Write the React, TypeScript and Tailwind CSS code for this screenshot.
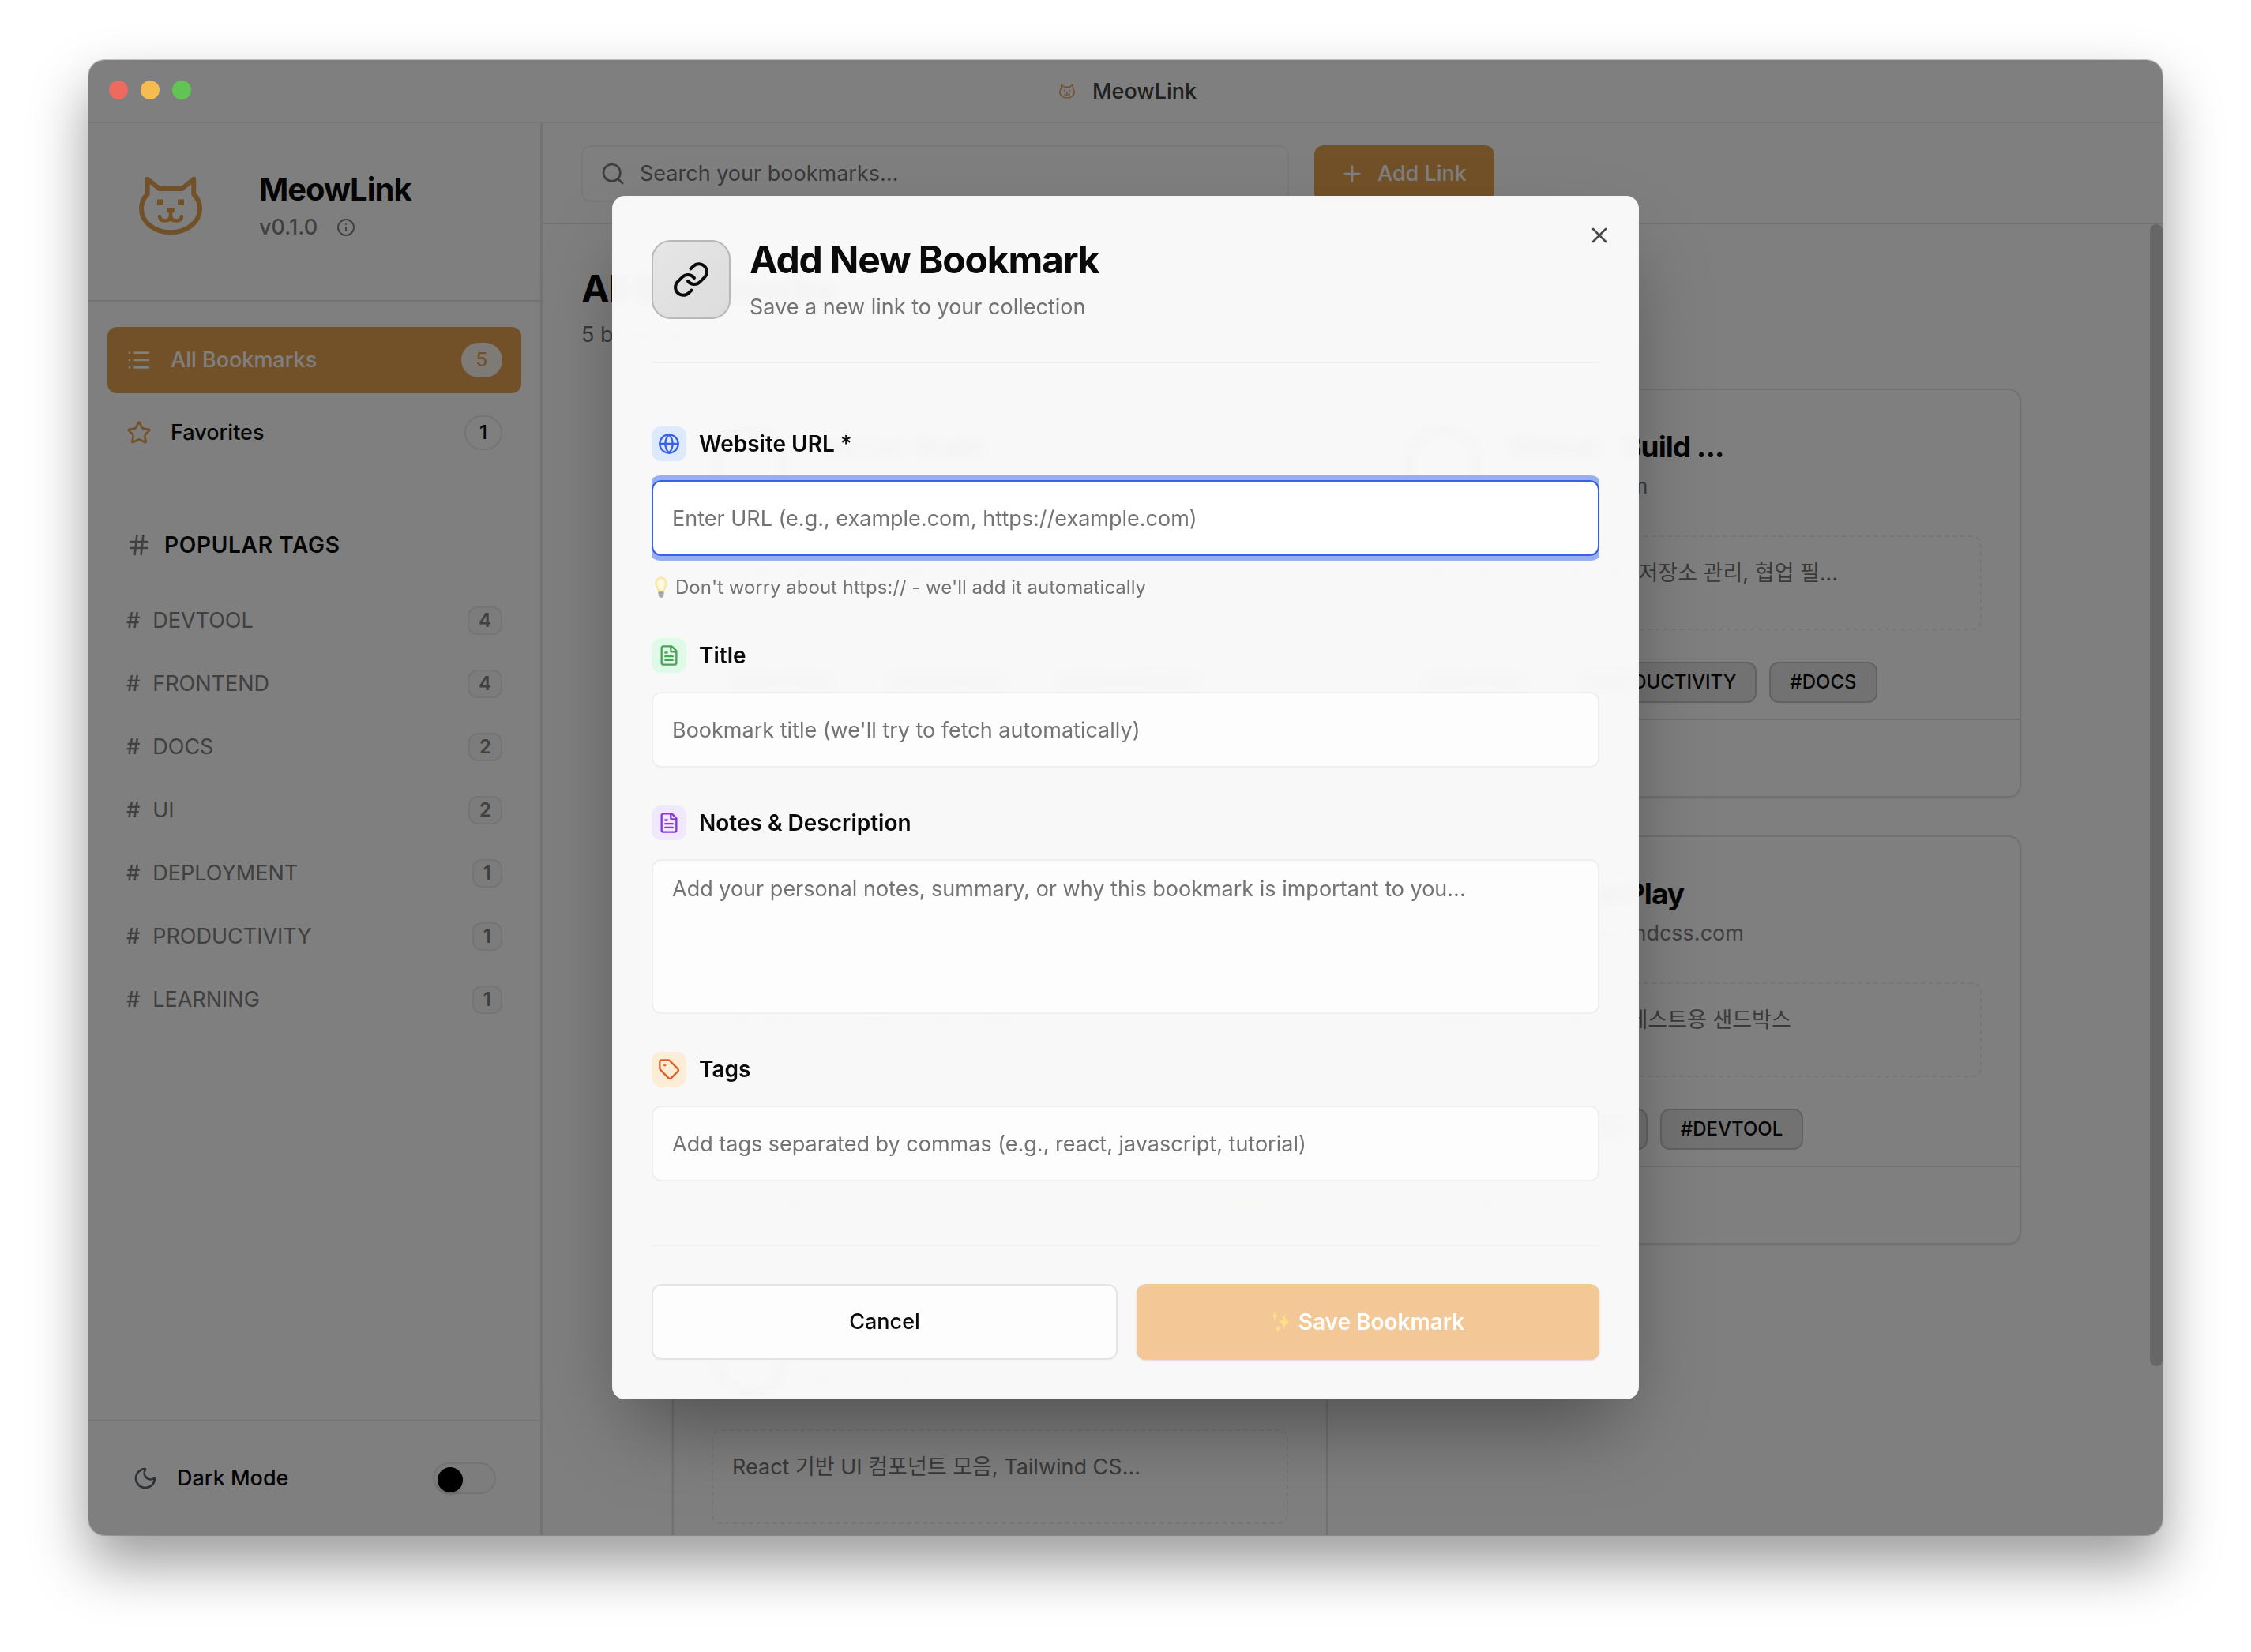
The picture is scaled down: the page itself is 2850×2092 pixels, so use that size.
import React from "react";
import {
  FileText,
  Globe,
  Hash,
  Info,
  Link,
  List,
  Moon,
  Plus,
  Search,
  Star,
  Tag,
  X,
} from "lucide-react";

function CatLogo({ className }: { className: string }) {
  return (
    <svg viewBox="0 0 128 128" className={className} fill="none" stroke="#e6a250" strokeLinejoin="round" strokeLinecap="round" aria-hidden="true">
      <path strokeWidth="6" d="M34.7 28.7 L49.7 41 H78.3 L93.3 28.7 V48 C98.5 53 101 59.5 101 66 C101 84 84 96.3 64 96.3 C44 96.3 27 84 27 66 C27 59.5 29.5 53 34.7 48 Z" />
      <path strokeWidth="4.5" d="M50 76 Q50.5 81.500 56.500 81.500 Q64 81.500 64 75 Q64 81.500 71.500 81.500 Q77.500 81.500 78 76 M64 76 V71" />
      <path d="M47 54.500 H55 V62 H47 Z M73 54.500 H81 V62 H73 Z M59.200 65 H68.800 V70 L65.500 72 H62.500 L59.200 70 Z" fill="#e6a250" stroke="none" />
    </svg>
  );
}

const tags = [
  { name: "DEVTOOL", count: 4 },
  { name: "FRONTEND", count: 4 },
  { name: "DOCS", count: 2 },
  { name: "UI", count: 2 },
  { name: "DEPLOYMENT", count: 1 },
  { name: "PRODUCTIVITY", count: 1 },
  { name: "LEARNING", count: 1 },
];

type Bookmark = {
  title: string;
  domain: string;
  note: string;
  tags: string[];
  favorite?: boolean;
};

const bookmarks: Bookmark[] = [
  { title: "Vercel: Build ...", domain: "vercel.com", note: "프론트엔드 배포, 서버리스 호스팅", tags: ["DEVTOOL", "FRONTEND", "DEPLOYMENT"] },
  { title: "GitHub · Build ...", domain: "github.com", note: "버전 관리, 코드 호스팅, 저장소 관리, 협업 필...", tags: ["DEVTOOL", "PRODUCTIVITY", "DOCS"] },
  { title: "MDN Web Docs", domain: "developer.mozilla.org", note: "웹 표준 문서, 자바스크립트 학습", tags: ["DOCS", "FRONTEND", "LEARNING"], favorite: true },
  { title: "Tailwind Play", domain: "play.tailwindcss.com", note: "Tailwind CSS 실시간 테스트용 샌드박스", tags: ["UI", "FRONTEND", "DEVTOOL"] },
  { title: "shadcn/ui", domain: "ui.shadcn.com", note: "React 기반 UI 컴포넌트 모음, Tailwind CS...", tags: ["UI", "FRONTEND", "DEVTOOL"] },
];

function Sidebar() {
  return (
    <aside className="flex w-[576px] shrink-0 flex-col border-r-4 border-[#e6e6e6]">
      <div className="flex h-[226px] shrink-0 items-center gap-12 border-b-2 border-[#e6e6e6] px-10 pb-3">
        <CatLogo className="size-32" />
        <div>
          <h2 className="text-[40px] leading-[48px] font-bold tracking-tight">MeowLink</h2>
          <p className="mt-1 flex items-center gap-6 text-[27px] leading-10 font-medium text-[#808080]">
            v0.1.0
            <Info className="size-6" />
          </p>
        </div>
      </div>
      <nav className="flex flex-1 flex-col px-6 pt-8">
        <button className="flex h-[84px] items-center gap-6 rounded-xl bg-[#e6a250] px-6 text-[27px] font-medium text-white">
          <List className="size-8" />
          <span className="flex-1 text-left">All Bookmarks</span>
          <span className="flex h-11 w-13 items-center justify-center rounded-full bg-white/90 text-[24px] text-[#e6a250]">5</span>
        </button>
        <button className="mt-2 flex h-[84px] items-center gap-6 rounded-xl px-6 text-[27px] font-medium">
          <Star className="size-8 text-[#e6a250]" />
          <span className="flex-1 text-left">Favorites</span>
          <span className="flex h-11 w-12 items-center justify-center rounded-full border-2 border-[#e8e8e8] text-[24px]">1</span>
        </button>
        <h3 className="mt-20 flex h-10 items-center gap-4 px-6 text-[28px] font-semibold tracking-wide">
          <Hash className="size-8 text-[#808080]" />
          POPULAR TAGS
        </h3>
        <ul className="mt-9">
          {tags.map((t) => (
            <li key={t.name}>
              <button className="flex h-20 w-full items-center gap-4 px-6 text-[27px] text-[#808080]">
                <span className="font-medium">#</span>
                <span className="flex-1 text-left">{t.name}</span>
                <span className="flex h-9 items-center rounded-xl border-2 border-[#e8e8e8] bg-[#f8f8f8] px-3 text-[24px] font-semibold">{t.count}</span>
              </button>
            </li>
          ))}
        </ul>
      </nav>
      <label className="flex h-[146px] shrink-0 items-center gap-6 border-t-2 border-[#e6e6e6] px-14 text-[27px] font-medium">
        <Moon className="size-8 text-[#5b6470]" />
        <span className="flex-1">Dark Mode</span>
        <span className="relative flex h-10 w-20 items-center rounded-full border-2 border-[#e8e8e8] bg-[#fafafa] px-1 pt-1">
          <input type="checkbox" className="peer sr-only" />
          <span className="size-8 rounded-full bg-black shadow-md peer-checked:ml-auto" />
        </span>
      </label>
    </aside>
  );
}

function Card({ b }: { b: Bookmark }) {
  return (
    <article className="flex h-[518px] flex-col rounded-2xl border-2 border-[#e2e2e2] shadow-sm">
      <div className="flex gap-8 px-12 pt-[46px]">
        <div className="flex size-24 shrink-0 items-center justify-center rounded-full border-8 border-[#333333]" />
        <div className="pt-1">
          <h3 className="text-[37px] leading-11 font-bold tracking-tight whitespace-nowrap">{b.title}</h3>
          <p className="mt-2 flex items-center gap-3 text-[27px] leading-10 text-[#808080]">
            <Globe className="size-6" />
            {b.domain}
          </p>
        </div>
      </div>
      <p className="mx-12 mt-[42px] h-[120px] rounded-xl border-2 border-dashed border-[#ededed] p-6 text-[27px] leading-11 whitespace-nowrap text-[#747474]">{b.note}</p>
      <div className="mx-12 mt-10 flex gap-4">
        {b.tags.map((t) => (
          <span key={t} className="flex h-13 items-center rounded-xl border-2 border-[#c4c4c4] bg-[#e4e4e4] px-6 text-[24px] font-medium">#{t}</span>
        ))}
      </div>
      <div className="mt-5 flex flex-1 items-center justify-between border-t-2 border-[#e2e2e2] px-12 text-[24px] text-[#808080]">
        <span>Added 8월 20일</span>
        {b.favorite && <span className="text-[#e6a250]">★ Favorite</span>}
      </div>
    </article>
  );
}

function Main() {
  return (
    <main className="flex min-w-0 flex-1 flex-col">
      <div className="flex h-32 shrink-0 items-start gap-8 border-b-2 border-[#e6e6e6] px-12 pt-7">
        <label className="flex h-18 w-full max-w-[896px] items-center gap-[18px] rounded-xl border-2 border-[#f2f2f2] px-[22px]">
          <Search className="size-8 text-[#7c7c7c]" />
          <input aria-label="Search bookmarks" placeholder="Search your bookmarks..." className="min-w-0 flex-1 bg-transparent text-[27px] outline-none placeholder:text-[#737373]" />
        </label>
        <button className="flex h-18 min-w-[228px] shrink-0 items-center gap-4 rounded-xl bg-[#e6a250] px-8 text-[27px] font-medium text-white">
          <Plus className="size-8" />
          Add Link
        </button>
      </div>
      <div className="flex min-h-0 flex-1">
        <div className="min-w-0 flex-1 overflow-y-auto px-12 pt-12 pb-12 [scrollbar-width:none]">
          <h1 className="text-[48px] leading-[68px] font-bold tracking-tight">All Bookmarks</h1>
          <p className="mt-0.5 text-[27px] leading-11 text-[#737373]">5 bookmarks</p>
          <div className="mx-auto mt-[46px] grid w-full max-w-[1708px] grid-cols-2 gap-12">
            {bookmarks.map((b) => (
              <Card key={b.title} b={b} />
            ))}
          </div>
        </div>
        <div className="w-4 shrink-0 pb-[214px]">
          <div className="h-full rounded-full bg-[#cecece]" />
        </div>
      </div>
    </main>
  );
}

function FieldLabel({ htmlFor, tile, icon, children }: { htmlFor: string; tile: string; icon: React.ReactNode; children: React.ReactNode }) {
  return (
    <label htmlFor={htmlFor} className="flex items-center gap-4 text-[28px] leading-10 font-semibold">
      <span className={"flex size-11 items-center justify-center rounded-xl " + tile}>{icon}</span>
      {children}
    </label>
  );
}

const fieldClass =
  "block h-24 w-full rounded-xl border-2 border-[#efefef] bg-white/80 px-6 text-[27px] outline-none placeholder:text-[#737373]";

function Bulb() {
  return (
    <svg viewBox="0 0 16 28" className="h-7 w-4" aria-hidden="true">
      <path d="M8 1C3.500 1 1 4.500 1 8.500c0 4 2.500 6 3.200 10h7.600c.7-4 3.200-6 3.200-10C15 4.500 12.500 1 8 1Z" fill="#fdeeb5" stroke="#f6dc8c" />
      <path d="M8 4c-2.500 0-4 2-4 4.500 0 2 1.500 5 2.200 8h3.600c.7-3 2.200-6 2.200-8C12 6 10.500 4 8 4Z" fill="#fffbe9" />
      <path d="M4.500 19h7v5l-2 3h-3l-2-3Z" fill="#b4b4b0" />
      <path d="M4.500 21h7M5 24h6" stroke="#8b8b88" />
    </svg>
  );
}

function Sparkles() {
  return (
    <svg viewBox="0 0 24 28" className="h-7 w-6" fill="#fbe089" aria-hidden="true">
      <path d="M16 4q1 8 7 10q-6 2-7 10q-1-8-7-10q6-2 7-10Z" />
      <path d="M4 1q.6 4.500 4 5.500q-3.400 1-4 5.500q-.6-4.500-4-5.500q3.400-1 4-5.500Z" />
      <path d="M8 18q.5 3.500 3 4.500q-2.500 1-3 4.500q-.5-3.500-3-4.500q2.500-1 3-4.500Z" />
    </svg>
  );
}

function AddDialog() {
  return (
    <form role="dialog" aria-labelledby="dialog-title" className="relative w-full max-w-[1300px] rounded-2xl border-2 border-[#f5f5f5] bg-white/95 p-12 shadow-[0_50px_100px_-24px_rgba(0,0,0,0.4)] backdrop-blur-[8px]">
      <button type="button" aria-label="Close" className="absolute top-8 right-8 flex size-8 items-center justify-center text-[#4a4a4a]">
        <X className="size-8" />
      </button>
      <header className="flex items-center gap-6 border-b-2 border-[#efefef] pt-[5px] pb-[53px]">
        <span className="flex size-25 items-center justify-center rounded-3xl border-2 border-[#b8b8b8] bg-linear-to-br from-[#e6e6e6] to-[#dcdcdc]">
          <Link className="size-12" />
        </span>
        <div>
          <h2 id="dialog-title" className="text-[48px] leading-13 font-bold tracking-tight">Add New Bookmark</h2>
          <p className="mt-[18px] text-[27px] leading-8 text-[#737373]">Save a new link to your collection</p>
        </div>
      </header>
      <div className="flex flex-col gap-12 overflow-x-clip border-b-2 border-[#efefef] py-20">
        <div>
          <FieldLabel htmlFor="url" tile="bg-[#dde9fd]" icon={<Globe className="size-7 text-[#3a62e0]" />}>Website URL *</FieldLabel>
          <input id="url" placeholder="Enter URL (e.g., example.com, https://example.com)" className="mt-6 block h-24 w-full rounded-xl border-2 border-[#3a62e0] bg-white px-6 text-[27px] ring-6 ring-[#97aeef] outline-none placeholder:text-[#737373]" />
          <p className="mt-6 flex h-8 items-center gap-2.5 pl-1 text-[24px] text-[#737373]">
            <Bulb />
            Don't worry about https:// - we'll add it automatically
          </p>
        </div>
        <div>
          <FieldLabel htmlFor="title" tile="bg-[#e0fae8]" icon={<FileText className="size-7 text-[#4ba356]" />}>Title</FieldLabel>
          <input id="title" placeholder="Bookmark title (we'll try to fetch automatically)" className={"mt-6 " + fieldClass} />
        </div>
        <div>
          <FieldLabel htmlFor="notes" tile="bg-[#f2e8fe]" icon={<FileText className="size-7 text-[#8836dd]" />}>Notes & Description</FieldLabel>
          <textarea id="notes" placeholder="Add your personal notes, summary, or why this bookmark is important to you..." className="mt-6 block h-[196px] w-full resize-none rounded-xl border-2 border-[#efefef] bg-white/80 px-6 py-4 text-[27px] leading-10 outline-none placeholder:text-[#737373]" />
        </div>
        <div>
          <FieldLabel htmlFor="tags" tile="bg-[#fdecd6]" icon={<Tag className="size-7 text-[#dd5f28]" />}>Tags</FieldLabel>
          <input id="tags" placeholder="Add tags separated by commas (e.g., react, javascript, tutorial)" className={"mt-6 " + fieldClass} />
        </div>
      </div>
      <footer className="flex gap-6 pt-12">
        <button type="button" className="h-24 flex-1 rounded-xl border-2 border-[#e4e4e4] bg-white/80 text-[27px] font-medium">Cancel</button>
        <button type="submit" className="flex h-24 flex-1 items-center justify-center gap-2.5 rounded-xl bg-[#f3c796] text-[28px] font-semibold text-white shadow-sm">
          <Sparkles />
          Save Bookmark
        </button>
      </footer>
    </form>
  );
}

export default function App() {
  return (
    <div className="h-screen bg-white px-28 pt-[76px] pb-[148px] font-['Inter','Noto_Sans_CJK_KR',sans-serif] text-[#0a0a0a]">
      <div className="relative h-full rounded-[20px] shadow-[0_36px_72px_rgba(0,0,0,0.4),0_0_0_1px_rgba(0,0,0,0.2)]">
        <div className="flex h-full flex-col overflow-hidden rounded-[20px] bg-white">
          <div className="flex h-20 shrink-0 items-center justify-center gap-4 border-b-2 border-[#f4f4f4] pt-0.5 text-[27px] font-medium text-[#404040]">
            <CatLogo className="size-8" />
            MeowLink
          </div>
          <div className="flex min-h-0 flex-1">
            <Sidebar />
            <Main />
          </div>
        </div>
        <div className="absolute inset-0 flex items-center justify-center rounded-[20px] bg-black/50">
          <AddDialog />
        </div>
        <div className="absolute top-[26px] left-[26px] flex gap-4">
          <button aria-label="Close window" className="size-6 rounded-full bg-[#ee6a5f]" />
          <button aria-label="Minimize window" className="size-6 rounded-full bg-[#f5bd4f]" />
          <button aria-label="Zoom window" className="size-6 rounded-full bg-[#61c454]" />
        </div>
      </div>
    </div>
  );
}
